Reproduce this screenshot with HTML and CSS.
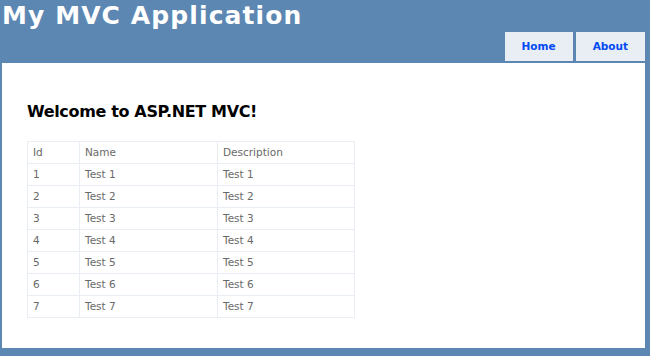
FILE: index.html
```html
<!DOCTYPE html>
<html lang="en">
<head>
    <meta charset="UTF-8">
    <title>Home Page</title>
    <link rel="stylesheet" href="styles.css">
</head>
<body>
    <div class="page">
        <div id="header">
            <h1 id="title">My MVC Application</h1>
            <ul id="menu">
                <li><a href="#">Home</a></li>
                <li><a href="#">About</a></li>
            </ul>
        </div>

        <div id="main">
            <h2>Welcome to ASP.NET MVC!</h2>
            <table>
                <tr>
                    <th class="col-id">Id</th>
                    <th class="col-name">Name</th>
                    <th class="col-desc">Description</th>
                </tr>
                <tr><td>1</td><td>Test 1</td><td>Test 1</td></tr>
                <tr><td>2</td><td>Test 2</td><td>Test 2</td></tr>
                <tr><td>3</td><td>Test 3</td><td>Test 3</td></tr>
                <tr><td>4</td><td>Test 4</td><td>Test 4</td></tr>
                <tr><td>5</td><td>Test 5</td><td>Test 5</td></tr>
                <tr><td>6</td><td>Test 6</td><td>Test 6</td></tr>
                <tr><td>7</td><td>Test 7</td><td>Test 7</td></tr>
            </table>
        </div>
    </div>
</body>
</html>
```

FILE: styles.css
```css
body {
    background-color: #5c87b2;
    font-size: 10.5px;
    font-family: "DejaVu Sans", Verdana, Tahoma, sans-serif;
    margin: 0;
    padding: 0;
    color: #696969;
}

.page {
    margin: 0 5px 9px 2px;
}

#header {
    display: flex;
    flex-direction: column;
}

#header h1 {
    font-weight: bold;
    margin: 0;
    padding: 0;
    color: #fff;
    line-height: 32px;
    height: 32px;
    font-size: 25px;
    letter-spacing: 1.1px;
}

ul#menu {
    display: flex;
    justify-content: flex-end;
    gap: 3px;
    list-style: none;
    margin: 0 0 2px 0;
    padding: 0;
}

ul#menu li a {
    display: block;
    height: 29px;
    line-height: 29px;
    padding: 0 17px;
    font-size: 10.5px;
    font-weight: bold;
    text-decoration: none;
    background-color: #e8eef4;
    color: #034af3;
}

#main {
    background-color: #fff;
    padding: 39px 25px 30px 25px;
}

h2 {
    font-size: 16px;
    font-weight: bold;
    color: #000;
    margin: 0 0 20px 0;
    line-height: 19px;
    letter-spacing: -0.35px;
}

table {
    border: solid 1px #e8eef4;
    border-collapse: collapse;
}

table td,
table th {
    padding: 4px 5px;
    line-height: 13px;
    border: solid 1px #e8eef4;
    text-align: left;
    font-weight: normal;
}

.col-id { width: 41px; }
.col-name { width: 127px; }
.col-desc { width: 126px; }
```
